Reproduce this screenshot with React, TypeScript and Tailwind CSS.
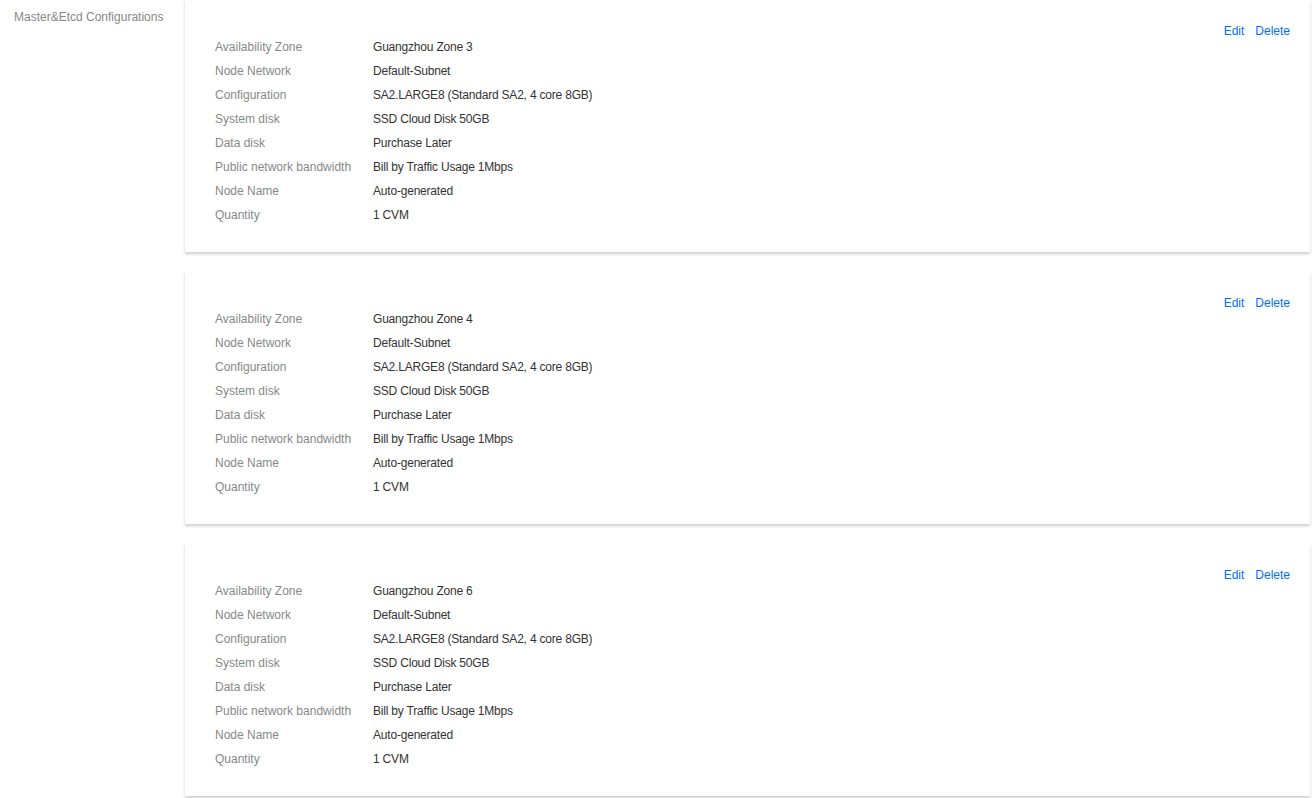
import React from "react";

const zones = ["Guangzhou Zone 3", "Guangzhou Zone 4", "Guangzhou Zone 6"];

function Card({ zone }: { zone: string }) {
  const rows: [string, string][] = [
    ["Availability Zone", zone],
    ["Node Network", "Default-Subnet"],
    ["Configuration", "SA2.LARGE8 (Standard SA2, 4 core 8GB)"],
    ["System disk", "SSD Cloud Disk 50GB"],
    ["Data disk", "Purchase Later"],
    ["Public network bandwidth", "Bill by Traffic Usage 1Mbps"],
    ["Node Name", "Auto-generated"],
    ["Quantity", "1 CVM"],
  ];
  return (
    <div className="relative bg-white h-[252px] pt-[35px] pl-[30px] shadow-[0_2px_3px_rgba(0,0,0,0.2)]">
      <div className="absolute top-[22px] right-[20px] flex gap-[11px] text-[12px] leading-[18px] text-[#006eff]">
        <span>Edit</span>
        <span>Delete</span>
      </div>
      {rows.map(([k, v]) => (
        <div key={k} className="flex h-6 items-center text-[12px]">
          <div className="w-[158px] text-[#888888]">{k}</div>
          <div className="text-[#333333] tracking-[-0.2px]">{v}</div>
        </div>
      ))}
    </div>
  );
}

export default function App() {
  return (
    <div
      className="flex w-[1312px] h-[798px] bg-white overflow-hidden"
      style={{ fontFamily: '"Liberation Sans", Arial, sans-serif' }}
    >
      <div className="w-[185px] shrink-0 pl-[14px] pt-[9px] text-[12px] leading-[16px] text-[#888888]">
        Master&amp;Etcd Configurations
      </div>
      <div className="flex-1 pr-[2px] flex flex-col gap-5">
        {zones.map((z) => (
          <Card key={z} zone={z} />
        ))}
      </div>
    </div>
  );
}
